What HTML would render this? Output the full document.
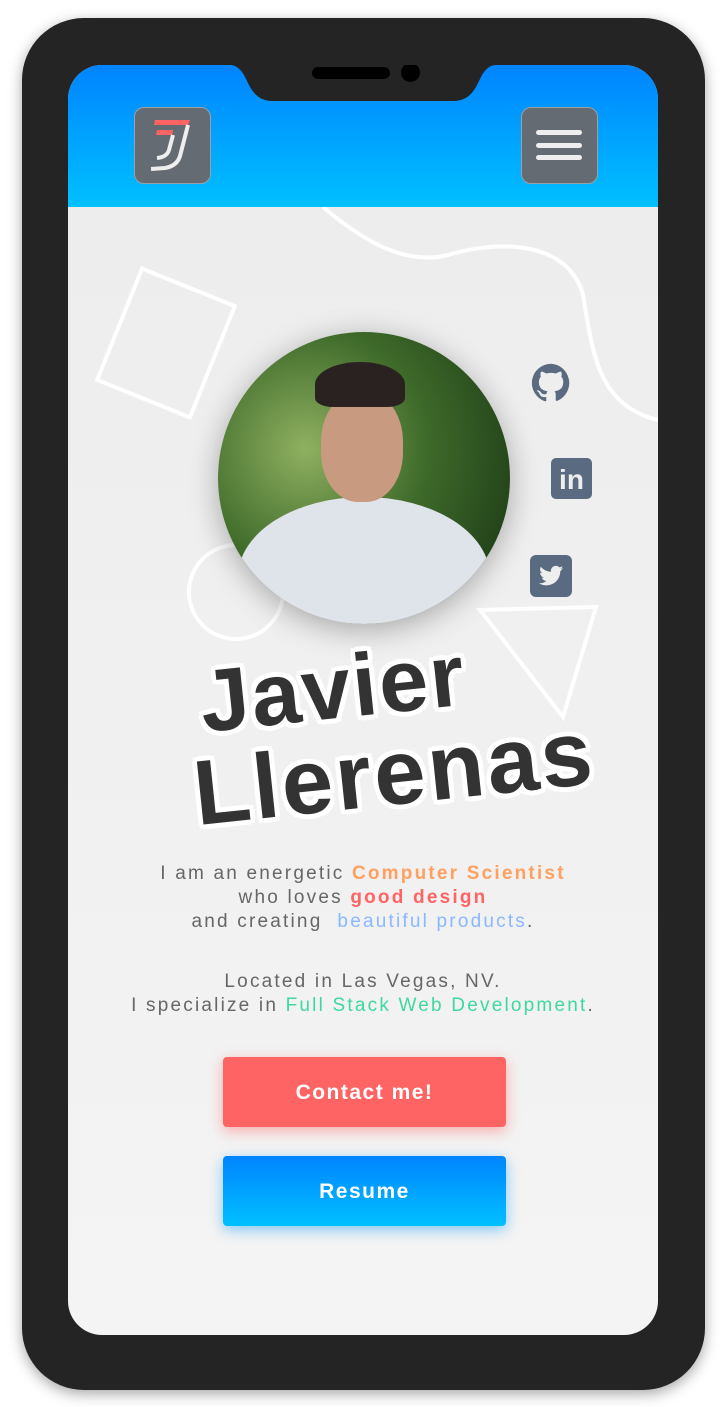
<!DOCTYPE html>
<html><head><meta charset="utf-8"><style>
*{margin:0;padding:0;box-sizing:border-box}
body{width:725px;height:1407px;background:#fff;position:relative;overflow:hidden;font-family:"Liberation Sans",sans-serif}
.phone{position:absolute;left:22px;top:18px;width:683px;height:1372px;background:#242424;border-radius:62px;box-shadow:0 4px 14px rgba(0,0,0,.35)}
.screen{position:absolute;left:68px;top:65px;width:590px;height:1270px;border-radius:34px;overflow:hidden;background:linear-gradient(#ececec,#f4f4f4)}
.hdr{position:absolute;left:0;top:0;width:590px;height:142px;background:linear-gradient(#0084ff,#00c0ff)}
.btn{position:absolute;top:42px;width:77px;height:77px;border-radius:10px;background:#656b73;border:1.5px solid #9aa0a6}
.line{font-size:19px;letter-spacing:2.2px;color:#666;text-align:center;position:absolute;left:0;width:590px}
.b{position:absolute;left:155px;width:283px;height:70px;border-radius:4px;color:#fff;font-weight:bold;font-size:21px;letter-spacing:1.5px;text-align:center;line-height:72px}
.nm{position:absolute;font-weight:bold;color:#333;font-size:88px;line-height:1;letter-spacing:2px;transform-origin:left bottom;text-shadow:0 0 3px #fff,4px 4px 0 #fff,-4px -4px 0 #fff,4px -4px 0 #fff,-4px 4px 0 #fff,0 5px 0 #fff,0 -5px 0 #fff,5px 0 0 #fff,-5px 0 0 #fff}
</style></head><body>
<div class="phone"></div>
<div class="screen">
 <svg style="position:absolute;left:0;top:0" width="590" height="1270" fill="none" stroke="#fff" stroke-width="4">
  <path d="M255 142 C300 180 340 200 380 190 C430 175 500 175 515 230 C525 290 530 340 590 355"/>
  <rect x="48" y="218" width="100" height="120" transform="rotate(22 98 278)"/>
  <circle cx="168" cy="527" r="47"/>
  <path d="M412 545 L528 542 L495 652 Z"/>
 </svg>
 <div class="hdr">
  <svg style="position:absolute;left:150px;top:0" width="290" height="38" viewBox="0 0 290 38"><path d="M0 0 H12 Q20 0 26 10 L32 22 Q40 36 54 36 H236 Q250 36 258 22 L264 10 Q270 0 278 0 H290 V0 Z" fill="#242424"/></svg>
  <div style="position:absolute;left:244px;top:2px;width:78px;height:12px;background:#000;border-radius:6px"></div>
  <div style="position:absolute;left:333px;top:-2px;width:19px;height:19px;background:#000;border-radius:50%"></div>
  <div class="btn" style="left:66px">
   <svg width="77" height="77" viewBox="0 0 77 77"><path d="M20 12h35l-2 5H19z M22 22h16l-1 5H21z" fill="#ff6464"/><path d="M53 17 L45 48 Q42 58 30 60 L16 61" stroke="#eee" stroke-width="4" fill="none"/><path d="M38 27 L34 42 Q32 49 22 50" stroke="#eee" stroke-width="4" fill="none"/></svg></div>
  <div class="btn" style="left:453px">
   <div style="position:absolute;left:14px;top:22px;width:46px;height:5px;background:#eee;border-radius:3px"></div>
   <div style="position:absolute;left:14px;top:35px;width:46px;height:5px;background:#eee;border-radius:3px"></div>
   <div style="position:absolute;left:14px;top:47px;width:46px;height:5px;background:#eee;border-radius:3px"></div></div>
 </div>
 <div style="position:absolute;left:150px;top:267px;width:292px;height:292px;border-radius:50%;overflow:hidden;box-shadow:0 6px 30px rgba(0,0,0,.3);background:radial-gradient(circle at 30% 40%,#8fb060,#3e6a2a 45%,#23431a 80%)">
  <div style="position:absolute;left:20px;top:165px;width:252px;height:160px;border-radius:50% 50% 0 0;background:#dfe3ea"></div>
  <div style="position:absolute;left:103px;top:60px;width:82px;height:110px;border-radius:45%;background:#c89a80"></div>
  <div style="position:absolute;left:97px;top:30px;width:90px;height:45px;border-radius:50% 50% 20% 20%;background:#2a2220"></div>
 </div>
 <svg style="position:absolute;left:462px;top:297px" width="42" height="42" viewBox="0 0 24 24"><path fill="#5a6a80" d="M12 1a11 11 0 0 0-3.5 21.4c.6.1.8-.2.8-.5v-2c-3.1.7-3.7-1.4-3.7-1.4-.5-1.3-1.2-1.6-1.2-1.6-1-.7.1-.7.1-.7 1.1.1 1.7 1.1 1.7 1.1 1 1.7 2.6 1.2 3.2.9.1-.7.4-1.2.7-1.5-2.4-.3-5-1.2-5-5.4 0-1.2.4-2.2 1.1-2.9-.1-.3-.5-1.4.1-2.9 0 0 .9-.3 3 1.1a10.400 10.400 0 0 1 5.500 0c2.100-1.400 3-1.100 3-1.100.600 1.500.200 2.600.100 2.900.700.700 1.100 1.700 1.100 2.900 0 4.200-2.600 5.100-5 5.400.400.300.700 1 .700 2v3c0 .3.200.6.800.5A11 11 0 0 0 12 1z"/></svg>
 <div style="position:absolute;left:483px;top:393px;width:41px;height:41px;border-radius:5px;background:#5a6a80;color:#eee;font-weight:bold;font-size:28px;line-height:43px;text-align:center">in</div>
 <div style="position:absolute;left:462px;top:490px;width:42px;height:42px;border-radius:6px;background:#5a6a80"><svg width="42" height="42" viewBox="0 0 24 24"><path fill="#eee" d="M19 7.5c-.5.2-1 .4-1.6.4.6-.3 1-.9 1.2-1.5-.5.3-1.1.5-1.8.7a2.800 2.800 0 0 0-4.800 2.500c-2.300-.1-4.400-1.200-5.800-2.900-.8 1.300-.4 2.900.9 3.700-.5 0-.9-.1-1.300-.3 0 1.400 1 2.600 2.300 2.800-.4.1-.9.1-1.300 0 .4 1.100 1.400 1.900 2.600 1.900A5.600 5.600 0 0 1 5 16.100 8 8 0 0 0 17.300 9.300z"/></svg></div>
 <div class="nm" style="left:137px;top:593px;transform:rotate(-6deg)">Javier</div>
 <div class="nm" style="left:131px;top:683px;transform:rotate(-6deg);font-size:92px;letter-spacing:3px">Llerenas</div>
 <div class="line" style="top:798px">I am an energetic <b style="color:#ffa060">Computer Scientist</b></div>
 <div class="line" style="top:822px">who loves <b style="color:#ff6464">good design</b></div>
 <div class="line" style="top:846px">and creating &nbsp;<span style="color:#8ab8ff">beautiful products</span>.</div>
 <div class="line" style="top:906px">Located in Las Vegas, NV.</div>
 <div class="line" style="top:930px">I specialize in <span style="color:#3ed8a0">Full Stack Web Development</span>.</div>
 <div class="b" style="top:992px;background:#ff6464;box-shadow:0 4px 14px rgba(255,100,100,.5)">Contact me!</div>
 <div class="b" style="top:1091px;background:linear-gradient(#0084ff,#00c0ff);box-shadow:0 4px 14px rgba(0,150,255,.45)">Resume</div>
</div>
</body></html>
